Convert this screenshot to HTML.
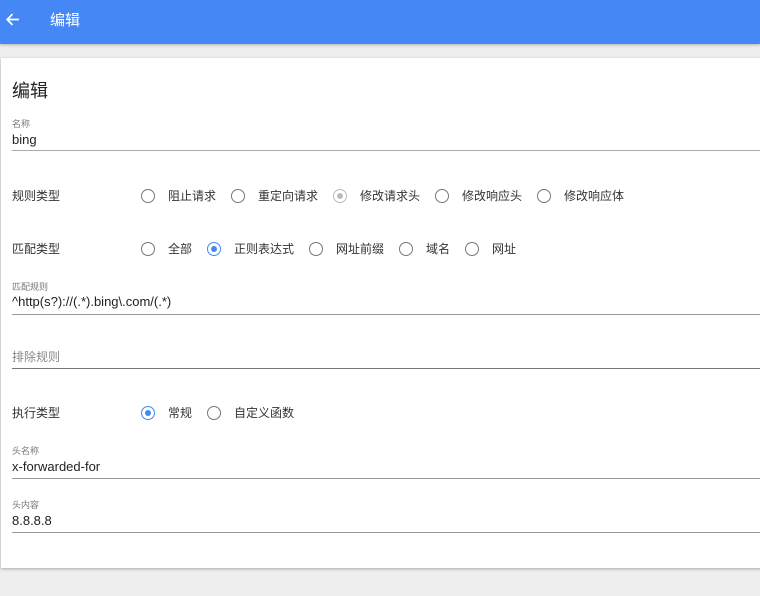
<!DOCTYPE html>
<html><head><meta charset="utf-8"><style>
*{margin:0;padding:0;box-sizing:border-box}
body{width:760px;height:596px;background:#eeeeee;font-family:"Liberation Sans","Noto Sans CJK SC",sans-serif;position:relative;overflow:hidden;color:#222}
.hdr{position:absolute;left:0;top:0;width:760px;height:44px;background:#4487f5;box-shadow:0 1px 3px rgba(0,0,0,.25)}
.hdr .t{position:absolute;left:50px;top:9px;color:#fff;font-size:15px}
.card{position:absolute;left:1px;top:58px;width:770px;height:510px;background:#fff;box-shadow:0 1px 3px rgba(0,0,0,.3)}
.a{position:absolute;white-space:nowrap}
.lbl{font-size:9px;color:#777}
.val{font-size:13px;color:#222}
.line{position:absolute;left:12px;width:760px;height:1px;background:#999}
.r{position:absolute;width:14px;height:14px;border:1.5px solid #777;border-radius:50%}
.r.on{border-color:#4487f5}
.r.on::after{content:"";position:absolute;left:2.5px;top:2.5px;width:6px;height:6px;border-radius:50%;background:#4487f5}
.r.dis{border-color:#bbb}
.r.dis::after{content:"";position:absolute;left:2.5px;top:2.5px;width:6px;height:6px;border-radius:50%;background:#bbb}
.rt{font-size:12px;color:#333}
</style></head><body>
<div class="hdr">
<svg style="position:absolute;left:5px;top:12px" width="15" height="15" viewBox="0 0 14 14"><path d="M13 7H2M7 2L2 7l5 5" stroke="#fff" stroke-width="1.6" fill="none"/></svg>
<div class="t">编辑</div></div>
<div class="card"></div>
<div class="a" style="left:12px;top:77px;font-size:18px;color:#222">编辑</div>
<div class="a lbl" style="left:12px;top:117px">名称</div>
<div class="a val" style="left:12px;top:132px">bing</div>
<div class="line" style="top:150px;background:#aaa;height:1px"></div>
<div class="a rt" style="left:12px;top:187px">规则类型</div>
<div class="r" style="left:141px;top:189px"></div><div class="a rt" style="left:168px;top:187px">阻止请求</div>
<div class="r" style="left:231px;top:189px"></div><div class="a rt" style="left:258px;top:187px">重定向请求</div>
<div class="r dis" style="left:333px;top:189px"></div><div class="a rt" style="left:360px;top:187px">修改请求头</div>
<div class="r" style="left:435px;top:189px"></div><div class="a rt" style="left:462px;top:187px">修改响应头</div>
<div class="r" style="left:537px;top:189px"></div><div class="a rt" style="left:564px;top:187px">修改响应体</div>
<div class="a rt" style="left:12px;top:240px">匹配类型</div>
<div class="r" style="left:141px;top:242px"></div><div class="a rt" style="left:168px;top:240px">全部</div>
<div class="r on" style="left:207px;top:242px"></div><div class="a rt" style="left:234px;top:240px">正则表达式</div>
<div class="r" style="left:309px;top:242px"></div><div class="a rt" style="left:336px;top:240px">网址前缀</div>
<div class="r" style="left:399px;top:242px"></div><div class="a rt" style="left:426px;top:240px">域名</div>
<div class="r" style="left:465px;top:242px"></div><div class="a rt" style="left:492px;top:240px">网址</div>
<div class="a lbl" style="left:12px;top:280px">匹配规则</div>
<div class="a val" style="left:12px;top:294px">^http(s?)://(.*).bing\.com/(.*)</div>
<div class="line" style="top:314px"></div>
<div class="a val" style="left:12px;top:348px;color:#888;font-size:12px">排除规则</div>
<div class="line" style="top:368px;background:#777"></div>
<div class="a rt" style="left:12px;top:404px">执行类型</div>
<div class="r on" style="left:141px;top:406px"></div><div class="a rt" style="left:168px;top:404px">常规</div>
<div class="r" style="left:207px;top:406px"></div><div class="a rt" style="left:234px;top:404px">自定义函数</div>
<div class="a lbl" style="left:12px;top:444px">头名称</div>
<div class="a val" style="left:12px;top:459px">x-forwarded-for</div>
<div class="line" style="top:478px"></div>
<div class="a lbl" style="left:12px;top:498px">头内容</div>
<div class="a val" style="left:12px;top:513px">8.8.8.8</div>
<div class="line" style="top:532px"></div>
</body></html>
